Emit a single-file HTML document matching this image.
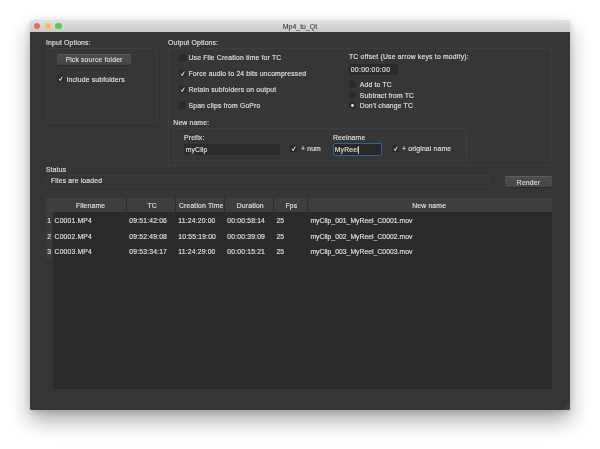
<!DOCTYPE html>
<html>
<head>
<meta charset="utf-8">
<title>Mp4_to_Qt</title>
<style>
html,body{margin:0;padding:0;background:#fff;}
body{width:600px;height:449px;position:relative;overflow:hidden;font-family:"Liberation Sans",sans-serif;font-size:6.8px;letter-spacing:0.17px;color:#e3e3e3;-webkit-text-stroke:0.13px #e3e3e3;}
.abs{position:absolute;}
#win{filter:blur(0.3px);position:absolute;left:30px;top:20px;width:540.4px;height:389.8px;background:linear-gradient(to bottom,#e1e1e1 0px,#cacaca 11.8px,#353535 11.8px);border-radius:2.5px 2.5px 1.5px 1.5px;box-shadow:0 11px 21px rgba(0,0,0,0.33),0 2px 7px rgba(0,0,0,0.14);overflow:hidden;}
#tb{position:absolute;left:0;top:0;width:540px;height:11.8px;}
#tb .t{position:absolute;left:0;width:540px;top:0;height:12px;line-height:13px;text-align:center;color:#383838;-webkit-text-stroke:0.1px #383838;letter-spacing:0.08px;}
.dot{position:absolute;top:3.1px;width:6.2px;height:6.2px;border-radius:50%;}
.lbl{position:absolute;white-space:nowrap;line-height:9.2px;height:9.2px;}
.grp{position:absolute;border:0.5px solid #3d3d3d;border-radius:1.5px;box-sizing:border-box;background:#363636;}
.btn{position:absolute;background:linear-gradient(#4c4c4c,#454545);border-radius:1.5px;text-align:center;box-shadow:0 0.6px 0.6px rgba(0,0,0,0.45);box-sizing:border-box;border-top:0.6px solid #5b5b5b;color:#dadada;}
.cb{position:absolute;width:7.3px;height:7.3px;border-radius:1.5px;background:#2a2a2a;}
.ck{position:absolute;width:7.3px;height:7.3px;}
.rd{position:absolute;width:7.5px;height:7.5px;border-radius:50%;background:#2a2a2a;}
.inp{position:absolute;background:#2b2b2b;box-sizing:border-box;border-radius:1px;}
.inp span{position:absolute;left:2.5px;top:0;line-height:12px;white-space:nowrap;}
#tbl{position:absolute;left:16.4px;top:177.5px;width:505.8px;height:191.3px;background:#2b2b2b;}
#hdr{position:absolute;left:0;top:0;width:505.8px;height:14.5px;background:#3e3e3e;}
#strip{position:absolute;left:0;top:0;width:6.3px;height:191.3px;background:#343434;}
.hc{position:absolute;top:0;height:14.5px;line-height:15.6px;text-align:center;}
.vs{position:absolute;top:0;width:0.6px;height:14.5px;background:#2d2d2d;}
.rh{position:absolute;left:0;width:5.8px;height:14.8px;background:#3b3b3b;}
.rn{position:absolute;left:-0.2px;width:5.8px;text-align:center;line-height:10px;letter-spacing:0;}
.c{position:absolute;white-space:nowrap;line-height:9.4px;}
.lbl,.c,.hc,.rn,.inp span,#tb .t,.bt{opacity:0.99;}
</style>
</head>
<body>
<div id="win">
  <div id="tb">
    <div class="dot" style="left:3.9px;background:#ee6a5e;"></div>
    <div class="dot" style="left:14.9px;background:#f5bf4f;"></div>
    <div class="dot" style="left:25.4px;background:#61c554;"></div>
    <div class="t">Mp4_to_Qt</div>
  </div>

  <div class="lbl" style="left:16px;top:18px;">Input Options:</div>
  <div class="grp" style="left:16px;top:27.6px;width:112px;height:75.4px;"></div>
  <div class="btn" style="left:27px;top:34px;width:74px;height:11px;line-height:10px;"><span class="bt">Pick source folder</span></div>
  <div class="cb" style="left:26.7px;top:55.2px;"></div><svg class="ck" style="left:26.7px;top:55.2px;" viewBox="0 0 14 14"><path d="M3.9 7.2 L6.2 10.8 L10.1 3.0" stroke="#f4f4f4" stroke-width="1.75" fill="none"/></svg>
  <div class="lbl" style="left:36.5px;top:55px;">Include subfolders</div>

  <div class="lbl" style="left:138px;top:18px;">Output Options:</div>
  <div class="grp" style="left:137.6px;top:27.6px;width:384px;height:118.3px;"></div>

  <div class="cb" style="left:148.5px;top:34px;"></div>
  <div class="lbl" style="left:158.5px;top:33.3px;">Use File Creation time for TC</div>
  <div class="cb" style="left:148.5px;top:50px;"></div><svg class="ck" style="left:148.5px;top:50px;" viewBox="0 0 14 14"><path d="M3.9 7.2 L6.2 10.8 L10.1 3.0" stroke="#f4f4f4" stroke-width="1.75" fill="none"/></svg>
  <div class="lbl" style="left:158.5px;top:49.3px;">Force audio to 24 bits uncompressed</div>
  <div class="cb" style="left:148.5px;top:66px;"></div><svg class="ck" style="left:148.5px;top:66px;" viewBox="0 0 14 14"><path d="M3.9 7.2 L6.2 10.8 L10.1 3.0" stroke="#f4f4f4" stroke-width="1.75" fill="none"/></svg>
  <div class="lbl" style="left:158.5px;top:65.3px;">Retain subfolders on output</div>
  <div class="cb" style="left:148.5px;top:82px;"></div>
  <div class="lbl" style="left:158.5px;top:81.3px;">Span clips from GoPro</div>

  <div class="lbl" style="left:319px;top:32.1px;letter-spacing:0.21px;">TC offset (Use arrow keys to modify):</div>
  <div class="inp" style="left:318.8px;top:44.2px;width:49.2px;height:10.8px;"><span style="left:1.9px;line-height:12.2px;letter-spacing:0.34px;">00:00:00:00</span></div>
  <div class="rd" style="left:318.75px;top:60.25px;"></div>
  <div class="lbl" style="left:329.8px;top:59.7px;">Add to TC</div>
  <div class="rd" style="left:318.75px;top:71px;"></div>
  <div class="lbl" style="left:329.8px;top:70.7px;">Subtract from TC</div>
  <div class="rd" style="left:318.75px;top:81.75px;"></div>
  <div class="abs" style="left:321.4px;top:84.4px;width:2.8px;height:2.8px;border-radius:50%;background:#d0d0d0;"></div>
  <div class="lbl" style="left:329.8px;top:81.3px;">Don't change TC</div>

  <div class="lbl" style="left:143.3px;top:97.7px;">New name:</div>
  <div class="grp" style="left:143px;top:107.6px;width:294px;height:33.2px;"></div>
  <div class="lbl" style="left:154px;top:112.5px;">Prefix:</div>
  <div class="inp" style="left:153.6px;top:123.8px;width:96.4px;height:11.2px;"><span style="left:2.1px;line-height:12.2px;">myClip</span></div>
  <div class="cb" style="left:260.2px;top:125px;"></div><svg class="ck" style="left:260.2px;top:125px;" viewBox="0 0 14 14"><path d="M3.9 7.2 L6.2 10.8 L10.1 3.0" stroke="#f4f4f4" stroke-width="1.75" fill="none"/></svg>
  <div class="lbl" style="left:271px;top:124.1px;">+ num</div>
  <div class="lbl" style="left:303px;top:112.5px;">Reelname</div>
  <div class="inp" style="left:303.6px;top:124.4px;width:47.4px;height:10.4px;background:#282828;box-shadow:0 0 0 0.75px #3869b3, 0 0 0.8px 0.9px rgba(56,105,179,0.3);"><span style="left:1.2px;line-height:11.9px;">MyReel</span><div class="abs" style="left:24.9px;top:1.4px;width:0.35px;height:7.8px;background:#c4c4c4;"></div></div>
  <div class="cb" style="left:361.5px;top:124.5px;"></div><svg class="ck" style="left:361.5px;top:124.5px;" viewBox="0 0 14 14"><path d="M3.9 7.2 L6.2 10.8 L10.1 3.0" stroke="#f4f4f4" stroke-width="1.75" fill="none"/></svg>
  <div class="lbl" style="left:372px;top:123.8px;">+ original name</div>

  <div class="lbl" style="left:16px;top:144.6px;">Status</div>
  <div class="abs" style="left:16px;top:155.1px;width:442.8px;height:11.6px;border:0.5px solid #3c3c3c;box-sizing:border-box;background:#353535;"></div>
  <div class="lbl" style="left:21px;top:155.6px;">Files are loaded</div>
  <div class="btn" style="left:475px;top:156px;width:47px;height:11.4px;line-height:11.6px;"><span class="bt">Render</span></div>

  <svg class="abs" style="left:533px;top:382.5px;width:7px;height:7px;" viewBox="0 0 7 7"><path d="M6.5 1 L1 6.5 M6.5 3.2 L3.2 6.5 M6.5 5.2 L5.2 6.5" stroke="#5a5a5a" stroke-width="0.6" fill="none"/></svg>
  <div id="tbl">
    <div id="strip"></div>
    <div id="hdr">
      <div class="hc" style="left:7.10px;width:74.20px;">Filename</div>
      <div class="hc" style="left:81.30px;width:49.00px;">TC</div>
      <div class="hc" style="left:130.30px;width:49.00px;">Creation Time</div>
      <div class="hc" style="left:179.30px;width:49.20px;">Duration</div>
      <div class="hc" style="left:228.30px;width:33.50px;">Fps</div>
      <div class="hc" style="left:260.80px;width:244.00px;">New name</div>
      <div class="vs" style="left:79.85px;"></div>
      <div class="vs" style="left:128.85px;"></div>
      <div class="vs" style="left:177.85px;"></div>
      <div class="vs" style="left:227.05px;"></div>
      <div class="vs" style="left:260.55px;"></div>
    </div>
    <div class="rh" style="top:14.80px;"></div>
    <div class="rh" style="top:30.50px;"></div>
    <div class="rh" style="top:46.30px;"></div>
    <div class="rn" style="top:18.40px;">1</div>
    <div class="rn" style="top:34.20px;">2</div>
    <div class="rn" style="top:49.90px;">3</div>
    <div class="c" style="left:8.20px;top:18.20px;">C0001.MP4</div>
    <div class="c" style="left:82.90px;top:18.20px;">09:51:42:06</div>
    <div class="c" style="left:131.90px;top:18.20px;">11:24:20:00</div>
    <div class="c" style="left:180.90px;top:18.20px;">00:00:58:14</div>
    <div class="c" style="left:230.00px;top:18.20px;">25</div>
    <div class="c" style="left:264.00px;top:18.20px;letter-spacing:0.03px;">myClip_001_MyReel_C0001.mov</div>
    <div class="c" style="left:8.20px;top:34.00px;">C0002.MP4</div>
    <div class="c" style="left:82.90px;top:34.00px;">09:52:49:08</div>
    <div class="c" style="left:131.90px;top:34.00px;">10:55:19:00</div>
    <div class="c" style="left:180.90px;top:34.00px;">00:00:39:09</div>
    <div class="c" style="left:230.00px;top:34.00px;">25</div>
    <div class="c" style="left:264.00px;top:34.00px;letter-spacing:0.03px;">myClip_002_MyReel_C0002.mov</div>
    <div class="c" style="left:8.20px;top:49.70px;">C0003.MP4</div>
    <div class="c" style="left:82.90px;top:49.70px;">09:53:34:17</div>
    <div class="c" style="left:131.90px;top:49.70px;">11:24:29:00</div>
    <div class="c" style="left:180.90px;top:49.70px;">00:00:15:21</div>
    <div class="c" style="left:230.00px;top:49.70px;">25</div>
    <div class="c" style="left:264.00px;top:49.70px;letter-spacing:0.03px;">myClip_003_MyReel_C0003.mov</div>
  </div>
</div>
</body>
</html>
